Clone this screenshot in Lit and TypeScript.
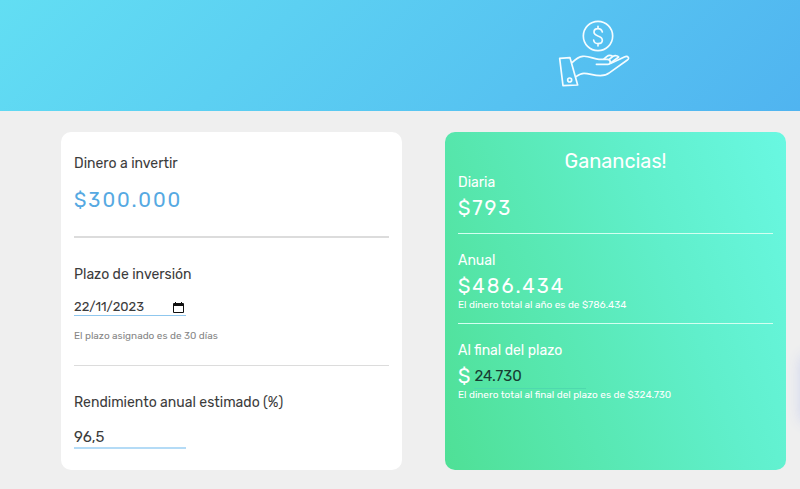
import { LitElement, html, css, svg } from "lit";
import { customElement } from "lit/decorators.js";

const handIcon = html`<svg class="hand" viewBox="54 30 216 204" role="img" aria-label="Inversiones">
  ${svg`<circle cx="174" cy="78" r="44"/>
  <path d="M187 66C185 58 180 56 174 56C166 56 162 60 162 66C162 73 166 75 174 78C183 81 187 84 187 91C187 97 182 101 174 101C166 101 162 97 161 90M174 49V56M174 101V108"/>
  <path d="M59 145L90 143L113 225L69 227Z"/>
  <circle cx="89" cy="210" r="6"/>
  <path d="M97 157C109 145 118 140 128 139C148 137 160 147 177 148L202 148C214 149 213 163 203 163L169 163"/>
  <path d="M213 160L253 141C264 136 270 145 262 150L209 188C200 195 193 197 181 197C160 197 148 190 132 190C122 190 116 194 108 200"/>
  <path d="M192 147L200 140C205 136 213 136 218 139M209 147L218 140C225 135 233 137 236 141L213 158"/>`}
</svg>`;

@customElement("app-root")
export class AppRoot extends LitElement {
  static styles = css`
    :host {
      display: block;
      position: relative;
      min-height: 100vh;
      overflow: hidden;
      background: #efefef;
      color: #3c3c3c;
      font-family: Rubik, Roboto, sans-serif;
      font-size: 14px;
      line-height: 20px;
    }
    * { box-sizing: border-box; }
    header {
      display: flex;
      justify-content: flex-end;
      padding: 20px 170px 23px 20px;
      background: linear-gradient(135deg, #62def3, #50b4f0);
    }
    .hand {
      display: block;
      width: 72px;
      height: 68px;
      fill: none;
      stroke: #f4fcff;
      stroke-width: 5;
      stroke-linecap: round;
      stroke-linejoin: round;
    }
    main {
      display: grid;
      grid-template-columns: 1fr 1fr;
      gap: 43px;
      padding: 21px 14px 19px 61px;
    }
    .card {
      border-radius: 10px;
      padding: 0 13px 21px;
      background: #fff;
    }
    .gains {
      color: #fff;
      background: linear-gradient(70deg, #4fe096, #60efcb 65%, #69f8e2);
    }
    section { padding: 27px 0 19px; border-top: 1px solid #dcdcdc; }
    section.first { padding: 22px 0 20px; border-top: 0; }
    section.thick { border-top: 2px solid #dcdcdc; }
    section.last { padding-bottom: 0; }
    .gains section { padding: 17px 0 12px; border-top: 1px solid #d4fff0; }
    .gains section.first { padding: 1px 0 12px; border-top: 0; }
    .label { display: block; }
    .value { font-size: 20px; letter-spacing: 2px; }
    .money { margin-top: 11px; line-height: 30px; color: #56a9e2; padding-bottom: 1px; }
    .gains .value { margin-top: 2px; line-height: 26px; }
    h1 {
      margin: 0;
      padding-top: 18px;
      text-align: center;
      font-size: 20px;
      font-weight: 400;
      line-height: 22px;
    }
    .field {
      display: flex;
      align-items: center;
      width: 112px;
      margin-top: 14px;
      border-bottom: 1px solid #8fc7ee;
    }
    input {
      flex: 1;
      min-width: 0;
      width: 100%;
      border: 0;
      padding: 0;
      outline: 0;
      background: none;
      color: inherit;
      font: inherit;
      font-size: 15px;
      line-height: 20px;
    }
    .date input { height: 16px; font-size: 13px; line-height: 16px; }
    .rate { border-bottom-width: 2px; border-color: #b4dbf6; }
    .rate input { height: 20px; }
    button { border: 0; padding: 0 2px 0 0; background: none; height: 14px; }
    button svg { display: block; width: 11px; height: 14px; }
    .hint { margin-top: 10px; font-size: 10px; color: #858585; }
    .note { font-size: 10px; line-height: 12px; }
    .total { display: flex; gap: 2px; align-items: center; height: 26px; }
    .total input {
      flex: none;
      width: 112px;
      height: 26px;
      border-bottom: 1px solid #4fd9ae;
      color: #173d32;
      letter-spacing: normal;
    }
    .side {
      position: absolute;
      left: 100%;
      top: 354px;
      width: 60px;
      height: 70px;
      border-radius: 10px;
      box-shadow: 0 0 14px #d0d6ee;
    }
  `;

  render() {
    return html`
      <header>${handIcon}</header>
      <main>
        <div class="card">
          <section class="first">
            <div class="label">Dinero a invertir</div>
            <div class="value money">$300.000</div>
          </section>
          <section class="thick">
            <label class="label" for="plazo">Plazo de inversión</label>
            <div class="field date">
              <input id="plazo" value="22/11/2023" />
              <button type="button" aria-label="Abrir calendario">
                <svg viewBox="0 0 11 14"><path fill="#111" fill-rule="evenodd" d="M2 2h1v1h5V2h1v1h1q1 0 1 1v8q0 1-1 1H1q-1 0-1-1V4q0-1 1-1h1zM1 6v6h9V6z"/></svg>
              </button>
            </div>
            <div class="hint">El plazo asignado es de 30 días</div>
          </section>
          <section class="last">
            <label class="label" for="rendimiento">Rendimiento anual estimado (%)</label>
            <div class="field rate"><input id="rendimiento" value="96,5" /></div>
          </section>
        </div>
        <div class="card gains">
          <h1>Ganancias!</h1>
          <section class="first">
            <div class="label">Diaria</div>
            <div class="value">$793</div>
          </section>
          <section>
            <div class="label">Anual</div>
            <div class="value">$486.434</div>
            <div class="note">El dinero total al año es de $786.434</div>
          </section>
          <section class="last">
            <label class="label" for="final">Al final del plazo</label>
            <div class="value total"><span>$</span><input id="final" value="24.730" /></div>
            <div class="note">El dinero total al final del plazo es de $324.730</div>
          </section>
        </div>
      </main>
      <div class="side"></div>
    `;
  }
}
